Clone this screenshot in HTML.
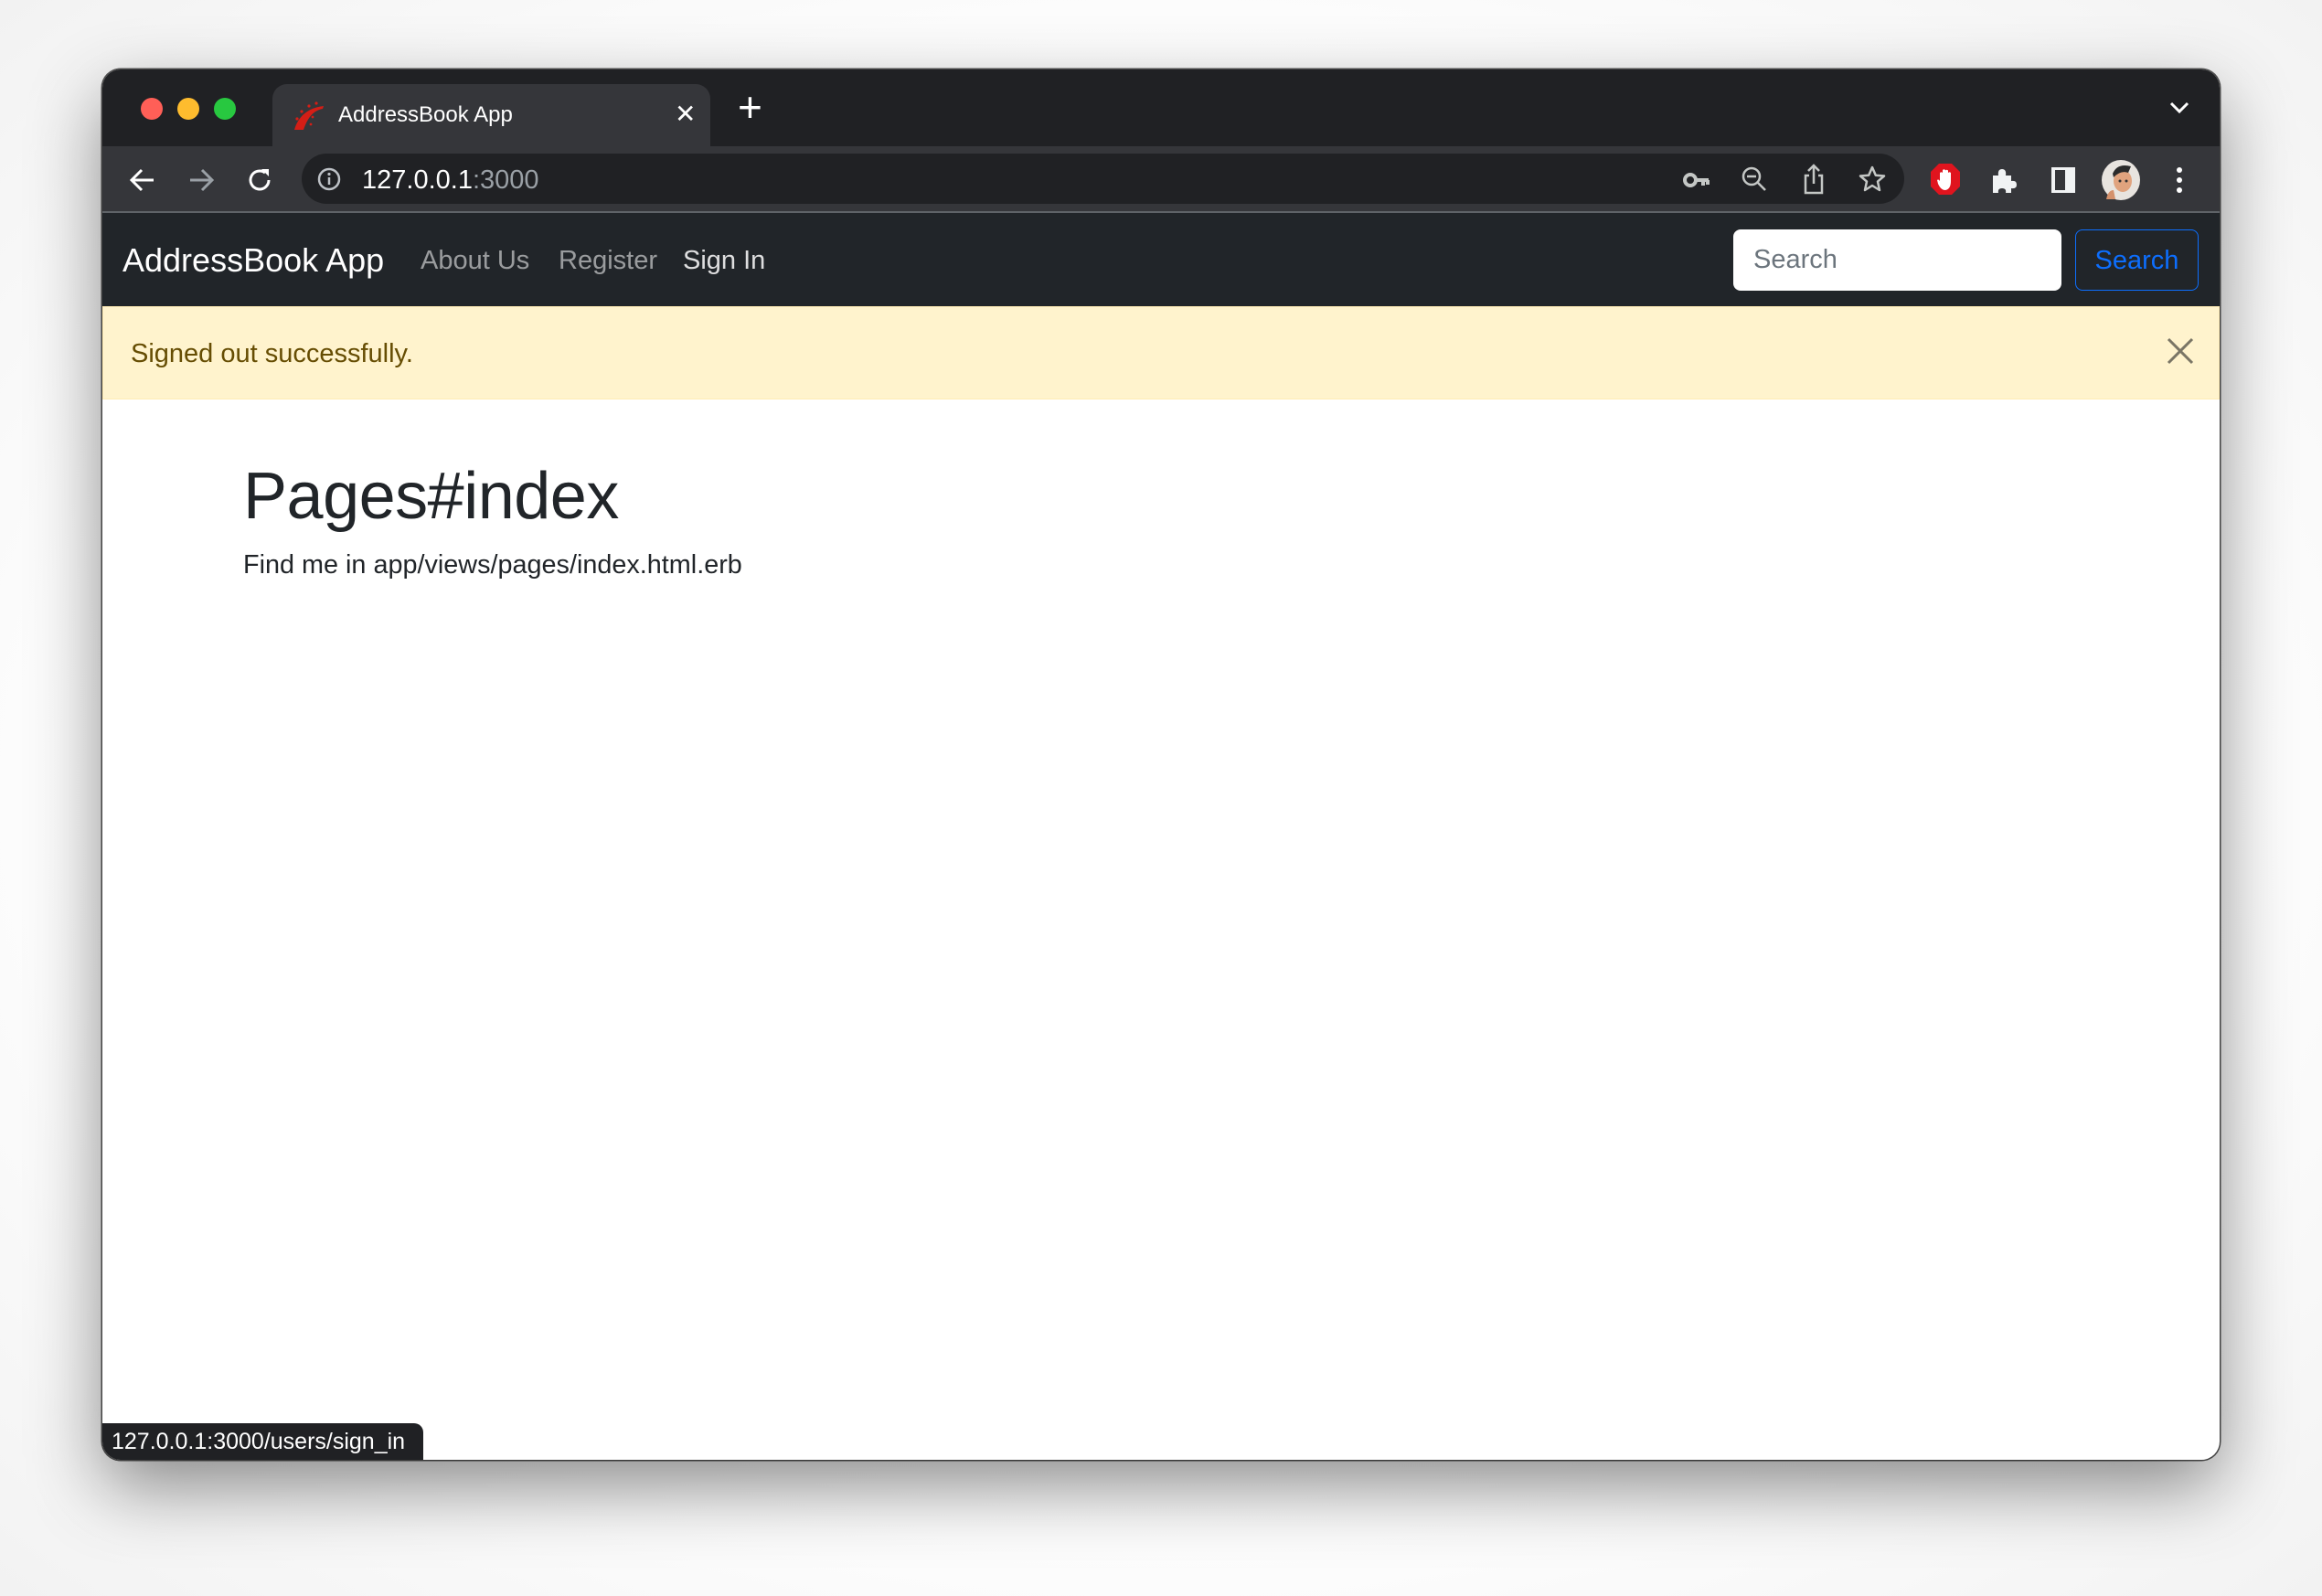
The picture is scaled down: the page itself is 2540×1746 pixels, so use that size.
<!DOCTYPE html>
<html><head><meta charset="utf-8"><style>
*{margin:0;padding:0;box-sizing:border-box}
html,body{width:2540px;height:1746px;overflow:hidden;background:#fff;font-family:"Liberation Sans",sans-serif}
.bg{position:absolute;inset:0;background:radial-gradient(ellipse at 50% 50%,#fff 60%,#f2f2f2 100%)}
.win{position:absolute;left:112px;top:76px;width:2316px;height:1521px;border-radius:20px;overflow:hidden;background:#fff;box-shadow:0 30px 80px rgba(0,0,0,.45),0 0 0 1.5px #555}
.tabs{position:absolute;left:0;top:0;width:100%;height:84px;background:#202124}
.dot{position:absolute;top:31px;width:24px;height:24px;border-radius:50%}
.tab{position:absolute;left:186px;top:16px;width:479px;height:68px;background:#35363a;border-radius:16px 16px 0 0}
.tab .t{position:absolute;left:72px;top:20px;color:#fff;font-size:24px}
.tab .x{position:absolute;left:440px;top:16px;color:#fff;font-size:28px}
.plus{position:absolute;left:695px;top:18px;color:#fff;font-size:46px;font-weight:300;line-height:46px}
.tool{position:absolute;left:0;top:84px;width:100%;height:73px;background:#35363a;border-bottom:2px solid #5f6368}
.omni{position:absolute;left:218px;top:8px;width:1753px;height:55px;border-radius:28px;background:#202124}
.url{position:absolute;left:284px;top:13px;font-size:29px;color:#fff}
.nav{position:absolute;left:0;top:157px;width:100%;height:102px;background:#212529}
.brand{position:absolute;left:22px;top:31px;color:#fff;font-size:36px}
.nl{position:absolute;top:36px;font-size:29px;color:rgba(255,255,255,.55)}
.inp{position:absolute;left:1784px;top:18px;width:359px;height:67px;background:#fff;border-radius:8px;font-size:29px;color:#6c757d;padding:17px 0 0 22px}
.btn{position:absolute;left:2158px;top:18px;width:135px;height:67px;border:1.5px solid #0d6efd;border-radius:8px;font-size:29px;color:#0d6efd;text-align:center;padding-top:17px}
.alert{position:absolute;left:0;top:259px;width:100%;height:102px;background:#fff3cd;border:1.5px solid #ffecb5;color:#664d03;font-size:29px}
.alert .m{position:absolute;left:30px;top:35px}
h1{position:absolute;left:154px;top:426px;font-size:72px;font-weight:500;color:#212529;letter-spacing:-0.5px}
p.f{position:absolute;left:154px;top:526px;font-size:28.8px;color:#212529}
.status{position:absolute;left:0;top:1481px;width:351px;height:40px;background:#202124;border-radius:0 10px 0 0;color:#fff;font-size:25px;padding:6px 0 0 10px}
svg{position:absolute}
</style></head><body>
<div class="bg"></div>
<div class="win">
 <div class="tabs">
  <div class="dot" style="left:42px;background:#ff5f57"></div>
  <div class="dot" style="left:82px;background:#febc2e"></div>
  <div class="dot" style="left:122px;background:#28c840"></div>
  <div class="tab">
   <svg style="left:22px;top:18px" width="36" height="34" viewBox="0 0 36 34"><path d="M2 32 C6 18 16 8 34 6 L33 9 C22 11 16 20 12 32 Z" fill="#d41e16"/><circle cx="5" cy="20" r="1.6" fill="#d41e16"/><circle cx="10" cy="12" r="1.6" fill="#d41e16"/><circle cx="18" cy="6" r="1.6" fill="#d41e16"/><circle cx="26" cy="3" r="1.6" fill="#d41e16"/><circle cx="22" cy="18" r="1.4" fill="#d41e16"/><circle cx="20" cy="26" r="1.4" fill="#d41e16"/></svg>
   <div class="t">AddressBook App</div>
   <div class="x">✕</div>
  </div>
  <div class="plus">+</div>
  <svg style="left:2260px;top:34px" width="24" height="16" viewBox="0 0 24 16"><path d="M3 3 L12 12 L21 3" stroke="#fff" stroke-width="3" fill="none"/></svg>
 </div>
 <div class="tool">
  <svg style="left:28px;top:22px" width="32" height="30" viewBox="0 0 32 30"><path d="M28 15 H5 M15 4 L4 15 L15 26" stroke="#fff" stroke-width="3" fill="none"/></svg>
  <svg style="left:92px;top:22px" width="32" height="30" viewBox="0 0 32 30"><path d="M4 15 H27 M17 4 L28 15 L17 26" stroke="#9aa0a6" stroke-width="3" fill="none"/></svg>
  <svg style="left:156px;top:21px" width="32" height="32" viewBox="0 0 32 32"><path d="M26 16 A10 10 0 1 1 22 8" stroke="#fff" stroke-width="3" fill="none"/><path d="M18 4 H26 V12 Z" fill="#fff"/></svg>
  <div class="omni">
   <svg style="left:16px;top:14px" width="28" height="28" viewBox="0 0 28 28"><circle cx="14" cy="14" r="11" stroke="#bdc1c6" stroke-width="2.5" fill="none"/><path d="M14 12 V20" stroke="#bdc1c6" stroke-width="2.5"/><circle cx="14" cy="8.5" r="1.6" fill="#bdc1c6"/></svg>
   <div class="url" style="left:66px">127.0.0.1<span style="color:#9aa0a6">:3000</span></div>
  </div>
  <svg style="left:1729px;top:23px" width="30" height="28" viewBox="0 0 30 28"><circle cx="8" cy="14" r="6" stroke="#c4c7c5" stroke-width="4" fill="none"/><path d="M14 14 H28 M22 14 V20 M27 14 V19" stroke="#c4c7c5" stroke-width="4"/></svg>
  <svg style="left:1792px;top:21px" width="30" height="32" viewBox="0 0 30 32"><circle cx="12" cy="12" r="9" stroke="#c4c7c5" stroke-width="2.5" fill="none"/><path d="M7 12 H17 M18.5 18.5 L27 27" stroke="#c4c7c5" stroke-width="2.5"/></svg>
  <svg style="left:1858px;top:18px" width="28" height="36" viewBox="0 0 28 36"><path d="M9 14 H5 V33 H23 V14 H19 M14 23 V3 M8 9 L14 3 L20 9" stroke="#c4c7c5" stroke-width="2.5" fill="none"/></svg>
  <svg style="left:1920px;top:20px" width="32" height="32" viewBox="0 0 32 32"><path d="M16 3 L19.8 11.8 L29 12.5 L22 18.6 L24 28 L16 23 L8 28 L10 18.6 L3 12.5 L12.2 11.8 Z" stroke="#c4c7c5" stroke-width="2.5" fill="none" stroke-linejoin="round"/></svg>
  <svg style="left:1999px;top:18px" width="34" height="36" viewBox="0 0 34 36"><path d="M10 1 H24 L33 10 V26 L24 35 H10 L1 26 V10 Z" fill="#e0141e"/><path d="M11 20 V11 Q12.5 9.5 14 11 V8 Q15.5 6.5 17 8 V8.5 Q18.5 7 20 8.5 V11 Q21.5 9.5 23 11 V20 Q23 29 17 30 Q12 30 9 23 L8 19 Q9.5 17.5 11 20 Z" fill="#fff"/></svg>
  <svg style="left:2065px;top:22px" width="30" height="30" viewBox="0 0 30 30"><path d="M3 10 H9 Q8 3 13 3 Q18 3 17 10 H23 V16 Q29 15 29 20 Q29 25 23 24 V29 H17 Q18 24 13 24 Q8 24 9 29 H3 Z" fill="#f1f3f4"/></svg>
  <svg style="left:2131px;top:22px" width="28" height="30" viewBox="0 0 28 30"><rect x="1" y="1" width="26" height="28" fill="#f1f3f4"/><rect x="5" y="4" width="11" height="22" fill="#35363a"/></svg>
  <svg style="left:2186px;top:14px" width="44" height="46" viewBox="0 0 44 46"><ellipse cx="22" cy="23" rx="21" ry="22" fill="#e8e4df"/><ellipse cx="24" cy="24" rx="10" ry="12" fill="#e0a37e"/><path d="M13 16 Q18 4 33 8 L30 15 Q22 12 14 20 Z" fill="#2b2b2b"/><circle cx="21" cy="24" r="1.5" fill="#333"/><circle cx="28" cy="24" r="1.5" fill="#333"/><path d="M6 44 Q8 34 14 34 L16 44 Z" fill="#d4916c"/></svg>
  <svg style="left:2266px;top:21px" width="12" height="32" viewBox="0 0 12 32"><circle cx="6" cy="5" r="3" fill="#fff"/><circle cx="6" cy="16" r="3" fill="#fff"/><circle cx="6" cy="27" r="3" fill="#fff"/></svg>
 </div>
 <div class="nav">
  <div class="brand">AddressBook App</div>
  <div class="nl" style="left:348px">About Us</div>
  <div class="nl" style="left:499px">Register</div>
  <div class="nl" style="left:635px;color:rgba(255,255,255,.85)">Sign In</div>
  <div class="inp">Search</div>
  <div class="btn">Search</div>
 </div>
 <div class="alert"><div class="m">Signed out successfully.</div>
  <svg style="left:2257px;top:33px" width="30" height="30" viewBox="0 0 30 30"><path d="M2 2 L28 28 M28 2 L2 28" stroke="#7a7565" stroke-width="3"/></svg>
 </div>
 <h1>Pages#index</h1>
 <p class="f">Find me in app/views/pages/index.html.erb</p>
 <div class="status">127.0.0.1:3000/users/sign_in</div>
</div>
</body></html>
